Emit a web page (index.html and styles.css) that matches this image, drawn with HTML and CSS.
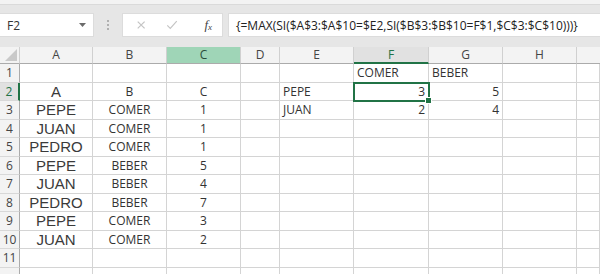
FILE: index.html
```html
<!doctype html>
<html lang="es">
    <head>
        <meta charset="utf-8">
        <title>Excel - MAX SI</title>
        <link rel="stylesheet" href="styles.css">
    </head>
    <body>
        <div class="ribbon-edge"></div>
        <div class="formula-bar">
            <div class="name-box">
                <span>F2</span>
                <svg width="9" height="6" viewBox="0 0 9 6"><path d="M1 1 L4.5 5 L8 1 Z" fill="#6b6b6b"/></svg>
            </div>
            <div class="grip">
                <i></i><i></i><i></i>
            </div>
            <div class="fx-buttons">
                <svg width="12" height="12" viewBox="0 0 12 12"><path d="M2 2 L10 10 M10 2 L2 10" stroke="#c4c4c4" stroke-width="1.4"/></svg>
                <svg width="14" height="12" viewBox="0 0 14 12"><path d="M1.5 6.5 L5 10 L12.5 1.5" stroke="#c4c4c4" stroke-width="1.4" fill="none"/></svg>
                <span class="fx">f<sub>x</sub></span>
            </div>
            <div class="formula">{=MAX(SI($A$3:$A$10=$E2,SI($B$3:$B$10=F$1,$C$3:$C$10)))}</div>
        </div>

        <div class="sheet">
            <div class="corner"><svg width="12" height="12" viewBox="0 0 12 12"><path d="M12 0 L12 12 L0 12 Z" fill="#c9c9c9"/></svg></div>
            <div class="col-head">A</div>
            <div class="col-head">B</div>
            <div class="col-head hl">C</div>
            <div class="col-head">D</div>
            <div class="col-head">E</div>
            <div class="col-head sel">F</div>
            <div class="col-head">G</div>
            <div class="col-head">H</div>
            <div class="col-head last"></div>
        </div>

        <script>
            (() => {
                // A, B, C, D, E, F, G, H, I
                const data = [
                    ['', '', '', '', '', 'COMER', 'BEBER', '', ''],
                    ['A', 'B', 'C', '', 'PEPE', '3', '5', '', ''],
                    ['PEPE', 'COMER', '1', '', 'JUAN', '2', '4', '', ''],
                    ['JUAN', 'COMER', '1', '', '', '', '', '', ''],
                    ['PEDRO', 'COMER', '1', '', '', '', '', '', ''],
                    ['PEPE', 'BEBER', '5', '', '', '', '', '', ''],
                    ['JUAN', 'BEBER', '4', '', '', '', '', '', ''],
                    ['PEDRO', 'BEBER', '7', '', '', '', '', '', ''],
                    ['PEPE', 'COMER', '3', '', '', '', '', '', ''],
                    ['JUAN', 'COMER', '2', '', '', '', '', '', ''],
                    ['', '', '', '', '', '', '', '', ''],
                    ['', '', '', '', '', '', '', '', '']
                ];
                const kinds = ['big', 'mid', 'mid', 'mid', 'left', 'left', 'left', 'mid', 'mid'];
                const sheet = document.querySelector('.sheet');
                data.forEach((row, r) => {
                    const head = document.createElement('div');
                    head.className = 'row-head' + (r === 1 ? ' sel' : '');
                    // last row is cut by the window edge, its number is not visible
                    head.textContent = r < 11 ? r + 1 : '';
                    sheet.appendChild(head);
                    row.forEach((value, c) => {
                        const cell = document.createElement('div');
                        let kind = kinds[c];
                        if ((c === 5 || c === 6) && r > 0) kind = 'num';
                        cell.className = 'cell ' + kind;
                        if (r === 1 && c === 5) cell.className += ' active';
                        cell.textContent = value;
                        sheet.appendChild(cell);
                    });
                });
            })();
        </script>
    </body>
</html>
```

FILE: styles.css
```css
* {
    margin: 0;
    padding: 0;
    box-sizing: border-box;
}

body {
    width: 600px;
    height: 274px;
    overflow: hidden;
    background: #e6e6e6;
    font-family: 'Open Sans', 'Liberation Sans', sans-serif;
    color: #262626;
}

.ribbon-edge {
    height: 5px;
    background: #f3f3f3;
    border-bottom: 1px solid #dadada;
}

.formula-bar {
    display: flex;
    align-items: center;
    height: 42px;
    padding: 8px 0 10px;
}

.name-box {
    width: 94px;
    height: 24px;
    background: #fff;
    border: 1px solid #dcdcdc;
    border-left: 0;
    display: flex;
    align-items: center;
    justify-content: space-between;
    padding: 0 6px 0 7px;
    font-size: 12px;
    color: #333;
}

.grip {
    width: 28px;
    display: flex;
    flex-direction: column;
    align-items: center;
    gap: 2px;
}

.grip i {
    width: 2px;
    height: 2px;
    background: #b0b0b0;
}

.fx-buttons {
    width: 101px;
    height: 24px;
    background: #fff;
    border: 1px solid #dcdcdc;
    display: flex;
    align-items: center;
    padding: 0 10px 0 13px;
    gap: 20px;
}

.fx {
    font-family: 'Liberation Serif', serif;
    font-style: italic;
    font-size: 13px;
    color: #444;
    margin-left: 6px;
}

.fx sub {
    font-size: 9px;
    vertical-align: -1px;
}

.formula {
    flex: 1;
    height: 24px;
    margin-left: 5px;
    background: #fff;
    border: 1px solid #dcdcdc;
    border-right: 0;
    padding: 3px 0 0 7px;
    font-size: 12px;
    color: #222;
    white-space: nowrap;
    overflow: hidden;
}

.sheet {
    display: grid;
    grid-template-columns: 20px 73px 74px 74px 39px 74px 75px 74px 74px 23px;
    grid-template-rows: 17px repeat(12, 18.5px);
    background: #fff;
}

.corner {
    background: #f3f3f3;
    border-right: 1px solid #d0d0d0;
    border-bottom: 1px solid #ababab;
    display: flex;
    align-items: flex-end;
    justify-content: flex-end;
    padding: 0 2px 2px 0;
}

.col-head {
    background: #f3f3f3;
    border-right: 1px solid #d0d0d0;
    border-bottom: 1px solid #ababab;
    font-size: 12px;
    text-align: center;
    line-height: 16px;
    color: #444;
}

.col-head.hl {
    background: #9fd5b7;
    color: #2b4c3a;
}

.col-head.sel {
    background: #e1e1e1;
    border-bottom: 2px solid #217346;
    color: #217346;
}

.col-head.last {
    border-right: 0;
}

.row-head {
    background: #f3f3f3;
    border-right: 1px solid #ababab;
    border-bottom: 1px solid #d8d8d8;
    font-size: 12px;
    text-align: center;
    line-height: 18px;
    color: #444;
}

.row-head.sel {
    background: #e1e1e1;
    border-right: 2px solid #217346;
    color: #217346;
}

.cell {
    border-right: 1px solid #d4d4d4;
    border-bottom: 1px solid #d4d4d4;
    font-size: 12px;
    line-height: 18px;
    white-space: nowrap;
    color: #333;
}

.cell.big {
    font-family: 'Liberation Sans', sans-serif;
    font-size: 15px;
    text-align: center;
    color: #3a3a3a;
}

.cell.mid {
    text-align: center;
}

.cell.left {
    padding-left: 3px;
}

.cell.num {
    text-align: right;
    padding-right: 3px;
}

.cell.active {
    position: relative;
    outline: 2px solid #217346;
    outline-offset: -1px;
    z-index: 1;
}

.cell.active::after {
    content: '';
    position: absolute;
    right: -4px;
    bottom: -4px;
    width: 5px;
    height: 5px;
    background: #217346;
    border: 1px solid #fff;
}
```
